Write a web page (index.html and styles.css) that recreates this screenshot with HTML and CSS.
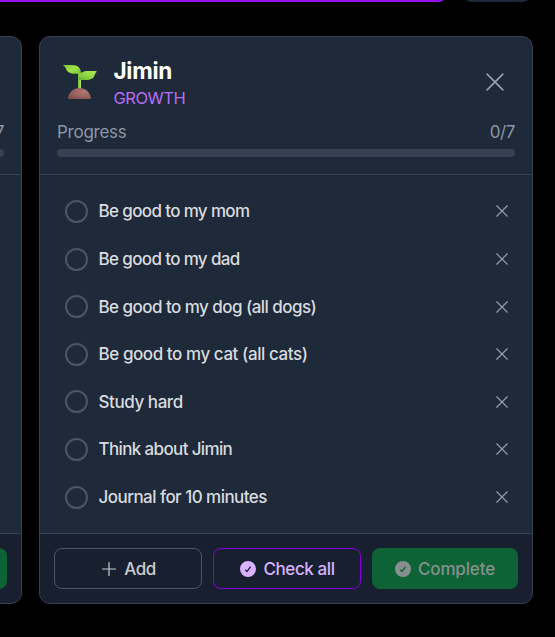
FILE: index.html
```html
<!DOCTYPE html>
<html lang="en">
<head>
<meta charset="utf-8">
<title>Routines</title>
<link rel="stylesheet" href="styles.css">
</head>
<body>
<svg class="defs" width="0" height="0" aria-hidden="true">
  <symbol id="x" viewBox="0 0 16 16"><path d="M1 1 15 15M15 1 1 15" fill="none" stroke="currentColor" stroke-linecap="round"/></symbol>
  <symbol id="check" viewBox="0 0 16 16"><path fill="currentColor" fill-rule="evenodd" d="M8 0a8 8 0 1 0 0 16A8 8 0 0 0 8 0Zm3.1 6.1-3.4 4.7a.75.75 0 0 1-1.15.08L4.9 9.2l.9-.85 1.2 1.2 3-4.2Z"/></symbol>
</svg>
<div class="toolbar"><div class="primary"></div><div class="secondary"></div></div>
<main class="board">
  <section class="card">
    <header class="head">
      <div class="title-row"></div>
      <div class="progress"><span></span><span class="count">0/7</span></div>
      <div class="track"></div>
    </header>
    <div class="tasks"></div>
    <footer class="foot"><div class="btn blank"></div><div class="btn blank"></div><div class="btn complete"></div></footer>
  </section>
  <section class="card">
    <header class="head">
      <div class="title-row">
        <svg class="plant" viewBox="0 0 34 36">
          <defs>
            <linearGradient id="leaf" x1="0" y1="0" x2="1" y2="1"><stop offset="0" stop-color="#7cc83e"/><stop offset=".5" stop-color="#a0e448"/><stop offset="1" stop-color="#70bd35"/></linearGradient>
            <linearGradient id="leaf2" x1="0" y1="1" x2="1" y2="0"><stop offset="0" stop-color="#65ad35"/><stop offset=".5" stop-color="#92d843"/><stop offset="1" stop-color="#b0ec58"/></linearGradient>
            <linearGradient id="stem"><stop offset="0" stop-color="#6fb63a"/><stop offset="1" stop-color="#b4ef55"/></linearGradient>
            <radialGradient id="soil" cx=".7" cy=".35" r=".8"><stop offset="0" stop-color="#b07b72"/><stop offset="1" stop-color="#854f50"/></radialGradient>
          </defs>
          <path d="M15 9h3v18h-3Z" fill="url(#stem)"/>
          <path d="M.4 1H9c6 0 9 3 9 8.8h-6C5.500 9.800 3.800 7 2.900 4.500 2.300 3 1.500 2.300.4 2Z" fill="url(#leaf)"/>
          <path d="M33.500 7H25c-6 0-9.500 2.500-9.500 9H23c6 0 8-2.500 8.800-5.300.5-1.600 1-2.100 1.700-2.500Z" fill="url(#leaf2)"/>
          <path d="M5 34C6 28 10.500 24 16.400 24S27 28 28 34q0 1-1 1H6q-1 0-1-1Z" fill="url(#soil)"/>
        </svg>
        <div class="names"><h1><span class="t-name">Jimin</span></h1><p><span class="t-growth">GROWTH</span></p></div>
        <svg class="close"><use href="#x"/></svg>
      </div>
      <div class="progress"><span class="t-progress">Progress</span><span class="count">0/7</span></div>
      <div class="track"></div>
    </header>
    <ul class="tasks">
      <li><i></i><span class="tight">Be good to my mom</span><svg><use href="#x"/></svg></li>
      <li><i></i><span class="tight">Be good to my dad</span><svg><use href="#x"/></svg></li>
      <li><i></i><span>Be good to my dog (all dogs)</span><svg><use href="#x"/></svg></li>
      <li><i></i><span class="loose">Be good to my cat (all cats)</span><svg><use href="#x"/></svg></li>
      <li><i></i><span class="loose">Study hard</span><svg><use href="#x"/></svg></li>
      <li><i></i><span class="tight">Think about Jimin</span><svg><use href="#x"/></svg></li>
      <li><i></i><span>Journal for 10 minutes</span><svg><use href="#x"/></svg></li>
    </ul>
    <footer class="foot">
      <div class="btn add"><svg viewBox="0 0 16 16"><path d="M8 1.500v13M1.500 8h13" fill="none" stroke="currentColor" stroke-width="1.200" stroke-linecap="round"/></svg><span>Add</span></div>
      <div class="btn all"><svg><use href="#check"/></svg><span>Check all</span></div>
      <div class="btn complete"><svg><use href="#check"/></svg><span>Complete</span></div>
    </footer>
  </section>
</main>
</body>
</html>
```
FILE: styles.css
```css
* { box-sizing: border-box; margin: 0; padding: 0; }
html, body { width: 555px; height: 637px; overflow: hidden; background: #000; }
body { font-family: Inter, "Liberation Sans", sans-serif; font-size: 17px; color: #d9dbdf; }
.defs { display: block; }
svg { flex: none; }
.toolbar { display: flex; gap: 14px; height: 36px; }
.primary, .secondary { height: 48px; margin-top: -46px; border-radius: 0 0 10px 10px; }
.primary { width: 448px; background: #9810fa; border-bottom-left-radius: 0; }
.secondary { width: 70px; background: #1e2939; }
.board { display: flex; gap: 17px; margin-left: -472px; width: 1005px; }
.card { display: flex; flex-direction: column; width: 494px; height: 568px; border: 1px solid #364153; border-radius: 11px; background: #1e2939; overflow: hidden; }
.head { height: 138px; padding: 16px 17px 0; border-bottom: 1px solid #364153; flex: none; }
.title-row { display: flex; height: 65px; }
.plant { width: 34px; height: 36px; margin: 11px 16.500px 0 6px; }
.names { flex: 1; }
h1 { font-size: 22.500px; line-height: 28px; margin-top: 4px; color: #fff; font-weight: 700; }
.names p { font-size: 16.500px; line-height: 24px; margin-top: 1px; color: #b96cf3; }
.close { width: 18px; height: 18px; margin: 20px 11px 0 0; color: #99a1af; stroke-width: 1.350; }
.progress { display: flex; justify-content: space-between; line-height: 24px; margin-top: 2px; color: #8d96a4; }
.track { height: 8px; border-radius: 4px; background: #364153; margin-top: 5px; }
.tasks { flex: 1; list-style: none; padding: 12.700px 24px 0 25px; }
.tasks li { display: flex; align-items: center; height: 47.600px; }
.tasks i { width: 23px; height: 23px; border: 2px solid #4a5565; border-radius: 50%; margin-right: 10.500px; flex: none; }
.tasks span { white-space: nowrap; font-weight: 450; letter-spacing: -.54px; }
.tasks .tight { letter-spacing: -.64px; }
.tasks .loose { letter-spacing: -.43px; }
.tasks svg { width: 12px; height: 12px; margin-left: auto; color: #99a1af; stroke-width: 1.450; }
.foot { display: flex; gap: 11px; height: 70px; flex: none; border-top: 1px solid #364153; padding: 14px 14px 0; background: #18202f; }
.btn { display: flex; align-items: center; justify-content: center; gap: 7px; width: 148px; flex: none; height: 41px; border: 1px solid #4a5565; border-radius: 8px; font-weight: 500; white-space: nowrap; }
.btn svg { width: 16px; height: 16px; }
.add { color: #c9ccd2; padding-left: 1px; }
.all { border-color: #8200db; color: #dab2ff; padding-left: 1px; }
.btn.complete { width: 146px; border: 0; background: #0d6336; color: #87908e; }
.blank { border-color: transparent; }
.t-name { letter-spacing: -.3px; }
.t-growth { letter-spacing: -.5px; }
.t-progress { letter-spacing: -.25px; }
.count { letter-spacing: -.4px; }
.btn span { letter-spacing: -.4px; }
.btn.complete span { letter-spacing: -.15px; }
```
